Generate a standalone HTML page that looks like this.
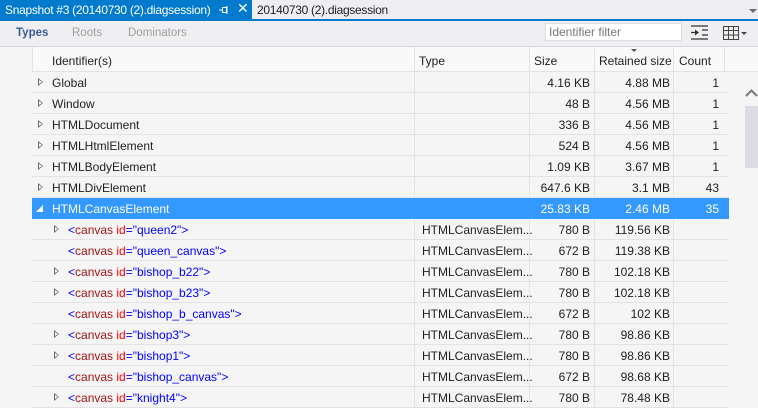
<!DOCTYPE html><html><head><style>
body{margin:0;width:758px;height:407px;overflow:hidden;background:#f5f5f5;font-family:"Segoe UI","Liberation Sans",sans-serif;font-size:12px;color:#1e1e1e;position:relative}
.a{position:absolute;white-space:nowrap}
.row{position:absolute;left:32px;width:697px;height:21px;border-bottom:1px solid #e3e3e6;box-sizing:border-box}
.row div{position:absolute;top:4px}
.n{text-align:right}
.tri{position:absolute;width:0;height:0;border-left:5px solid #6d6d6d;border-top:4px solid transparent;border-bottom:4px solid transparent;top:6px}
.tri:after{content:"";position:absolute;left:-4px;top:-2px;border-left:3px solid #f5f5f5;border-top:2px solid transparent;border-bottom:2px solid transparent}
.b{color:#0000ff}.r{color:#a31515}.i{color:#ff0000}
.t{font-size:12px;letter-spacing:-0.3px}
</style></head><body>
<div class="a" style="left:0;top:0;width:758px;height:20px;background:#eeeef2"></div>
<div class="a" style="left:0;top:0;width:252px;height:21px;background:#007acc"></div>
<div class="a" style="left:0;top:19px;width:758px;height:2px;background:#007acc"></div>
<div class="a t" style="left:5px;top:3px;color:#fff">Snapshot #3 (20140730 (2).diagsession)</div>
<svg class="a" style="left:219px;top:6px" width="10" height="8"><g stroke="#fff" stroke-width="1" fill="none"><line x1="0" y1="4" x2="3" y2="4"/><rect x="3.5" y="1.5" width="4" height="5"/><line x1="8" y1="0" x2="8" y2="8"/></g></svg>
<div class="a" style="left:237px;top:0px;color:#fff;font-size:14px">✕</div>
<div class="a t" style="left:257px;top:3px;color:#1e1e1e">20140730 (2).diagsession</div>
<div class="a" style="left:749px;top:9px;border-top:4px solid #6d6d6d;border-left:4px solid transparent;border-right:4px solid transparent"></div>
<div class="a" style="left:0;top:21px;width:758px;height:25px;background:#efeff2;border-bottom:1px solid #d6d6db"></div>
<div class="a" style="left:16px;top:27px;color:#3b5b9b;font-weight:bold;font-size:11.5px">Types</div>
<div class="a" style="left:72px;top:27px;color:#a0a0a0;font-size:11.5px">Roots</div>
<div class="a" style="left:128px;top:27px;color:#a0a0a0;font-size:11.5px">Dominators</div>
<div class="a" style="left:545px;top:23px;width:137px;height:18px;background:#fff;border:1px solid #ddd;box-sizing:border-box;color:#777;padding-left:3px;font-size:12px;line-height:16px">Identifier filter</div>
<svg class="a" style="left:690px;top:24px" width="60" height="18"><g stroke="#333" stroke-width="1.3"><line x1="1" y1="2" x2="18" y2="2"/><line x1="1" y1="15" x2="18" y2="15"/><line x1="1" y1="8.5" x2="8" y2="8.5"/><line x1="12" y1="6" x2="18" y2="6"/><line x1="12" y1="11" x2="18" y2="11"/></g><path d="M5 5.5 L9 8.5 L5 11.5Z" fill="#333"/>
<g stroke="#444" fill="none" stroke-width="1"><rect x="33.5" y="2.5" width="15" height="13"/><line x1="33.5" y1="6.5" x2="48.5" y2="6.5"/><line x1="33.5" y1="11" x2="48.5" y2="11"/><line x1="38.5" y1="2.5" x2="38.5" y2="15.5"/><line x1="43.5" y1="2.5" x2="43.5" y2="15.5"/></g><path d="M51 8 L57 8 L54 11Z" fill="#444"/></svg>
<div class="a" style="left:32px;top:47px;width:726px;height:25px;background:#f9f9f9;border-bottom:1px solid #e3e3e6;box-sizing:border-box"></div>
<div class="a" style="left:32px;top:47px;width:1px;height:25px;background:#e3e3e6"></div>
<div class="a" style="left:414px;top:47px;width:1px;height:25px;background:#e3e3e6"></div>
<div class="a" style="left:529px;top:47px;width:1px;height:25px;background:#e3e3e6"></div>
<div class="a" style="left:594px;top:47px;width:1px;height:25px;background:#e3e3e6"></div>
<div class="a" style="left:673px;top:47px;width:1px;height:25px;background:#e3e3e6"></div>
<div class="a" style="left:724px;top:47px;width:1px;height:25px;background:#e3e3e6"></div>
<div class="a" style="left:52px;top:54px">Identifier(s)</div>
<div class="a" style="left:419px;top:54px">Type</div>
<div class="a" style="left:534px;top:54px">Size</div>
<div class="a" style="left:599px;top:54px">Retained size</div>
<div class="a" style="left:679px;top:54px">Count</div>
<div class="a" style="left:631px;top:49px;border-top:3px solid #555;border-left:3px solid transparent;border-right:3px solid transparent"></div>
<div class="a" style="left:414px;top:72px;width:1px;height:335px;background:#e3e3e6"></div>
<div class="a" style="left:529px;top:72px;width:1px;height:335px;background:#e3e3e6"></div>
<div class="a" style="left:594px;top:72px;width:1px;height:335px;background:#e3e3e6"></div>
<div class="a" style="left:673px;top:72px;width:1px;height:335px;background:#e3e3e6"></div>
<div id="rows"></div>
<svg class="a" style="left:745px;top:88px" width="13" height="10"><path d="M1 8 L6.5 2.5 L12 8" stroke="#777" stroke-width="2" fill="none"/></svg>
<div class="a" style="left:745px;top:106px;width:13px;height:62px;background:#dcdce2"></div>
<script>
var R=[["Global",1,"","4.16 KB","4.88 MB","1"],["Window",1,"","48 B","4.56 MB","1"],["HTMLDocument",1,"","336 B","4.56 MB","1"],["HTMLHtmlElement",1,"","524 B","4.56 MB","1"],["HTMLBodyElement",1,"","1.09 KB","3.67 MB","1"],["HTMLDivElement",1,"","647.6 KB","3.1 MB","43"],["HTMLCanvasElement",2,"","25.83 KB","2.46 MB","35"],
["queen2",3,1,"780 B","119.56 KB",""],["queen_canvas",3,0,"672 B","119.38 KB",""],["bishop_b22",3,1,"780 B","102.18 KB",""],["bishop_b23",3,1,"780 B","102.18 KB",""],["bishop_b_canvas",3,0,"672 B","102 KB",""],["bishop3",3,1,"780 B","98.86 KB",""],["bishop1",3,1,"780 B","98.86 KB",""],["bishop_canvas",3,0,"672 B","98.68 KB",""],["knight4",3,1,"780 B","78.48 KB",""]];
var h="";R.forEach(function(r,k){var y=72+k*21;var sel=r[1]==2;
h+='<div class="row" style="top:'+y+'px;'+(sel?'background:#3399ff;color:#fff;border-color:#3399ff':'')+'">';
if(r[1]==3){if(r[2])h+='<span class="tri" style="left:22px"></span>';
h+='<div style="left:36px"><span class="b">&lt;</span><span class="r">canvas</span> <span class="i">id</span><span class="b">="'+r[0]+'"&gt;</span></div><div style="left:390px">HTMLCanvasElem...</div>';}
else{if(sel)h+='<span class="a" style="left:4px;top:7px;border-bottom:7px solid #fff;border-left:7px solid transparent"></span>';else h+='<span class="tri" style="left:6px"></span>';h+='<div style="left:20px">'+r[0]+'</div>';}
h+='<div class="n" style="left:498px;width:60px">'+r[3]+'</div>';
h+='<div class="n" style="left:560px;width:78px">'+r[4]+'</div>';
h+='<div class="n" style="left:640px;width:47px">'+r[5]+'</div></div>';});
document.getElementById("rows").innerHTML=h;
</script>
</body></html>
